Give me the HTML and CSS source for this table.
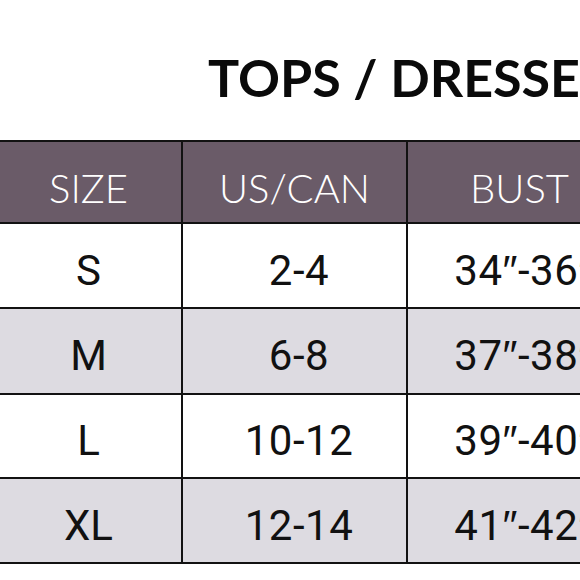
FILE: index.html
```html
<!DOCTYPE html>
<html>
<head>
<meta charset="utf-8">
<link rel="stylesheet" href="styles.css">
</head>
<body>
<div class="page">
  <h1 class="title">TOPS / DRESSES</h1>
  <div class="chart">
    <div class="cell head">SIZE</div>
    <div class="cell head">US/CAN</div>
    <div class="cell head">BUST</div>
    <div class="cell head">WAIST</div>

    <div class="cell">S</div>
    <div class="cell val">2-4</div>
    <div class="cell val">34<span class="in">″</span>-36<span class="in">″</span></div>
    <div class="cell val">27<span class="in">″</span>-29<span class="in">″</span></div>

    <div class="cell alt">M</div>
    <div class="cell alt val">6-8</div>
    <div class="cell alt val">37<span class="in">″</span>-38<span class="in">″</span></div>
    <div class="cell alt val">30<span class="in">″</span>-31<span class="in">″</span></div>

    <div class="cell">L</div>
    <div class="cell val">10-12</div>
    <div class="cell val">39<span class="in">″</span>-40<span class="in">″</span></div>
    <div class="cell val">32<span class="in">″</span>-33<span class="in">″</span></div>

    <div class="cell alt">XL</div>
    <div class="cell alt val">12-14</div>
    <div class="cell alt val">41<span class="in">″</span>-42<span class="in">″</span></div>
    <div class="cell alt val">34<span class="in">″</span>-35<span class="in">″</span></div>
  </div>
</div>
</body>
</html>
```

FILE: styles.css
```css
html, body {
  margin: 0;
  padding: 0;
  background: #ffffff;
  overflow: hidden;
}

.page {
  width: 580px;
  height: 580px;
  overflow: hidden;
}

.title {
  margin: 0;
  box-sizing: border-box;
  height: 140px;
  padding: 51px 0 0 208px;
  font-family: "Lato", "DejaVu Sans", sans-serif;
  font-weight: 700;
  font-size: 52px;
  line-height: 52px;
  letter-spacing: 0;
  color: #0a0a0a;
  white-space: nowrap;
}

.chart {
  display: grid;
  grid-template-columns: 185px 223px 223px 223px;
  grid-template-rows: 80px 83px 84px 82px 83px;
  gap: 2px;
  padding: 2px 0;
  margin-left: -4px;
  width: 900px;
  background: #121212;
}

.cell {
  display: flex;
  align-items: center;
  justify-content: center;
  box-sizing: border-box;
  padding-top: 9px;
  background: #ffffff;
  font-family: "Roboto", "Liberation Sans", sans-serif;
  font-size: 42px;
  color: #111111;
  white-space: nowrap;
}

.cell.val {
  padding-left: 9px;
  letter-spacing: 0.5px;
}

.in {
  font-family: "DejaVu Sans", sans-serif;
  font-weight: 300;
}

.cell.alt {
  background: #dddbe1;
}

.cell.head {
  padding-top: 11px;
  background: #6a5b68;
  color: #ffffff;
  font-family: "Lato", "DejaVu Sans", sans-serif;
  font-weight: 300;
  font-size: 40px;
}
```
